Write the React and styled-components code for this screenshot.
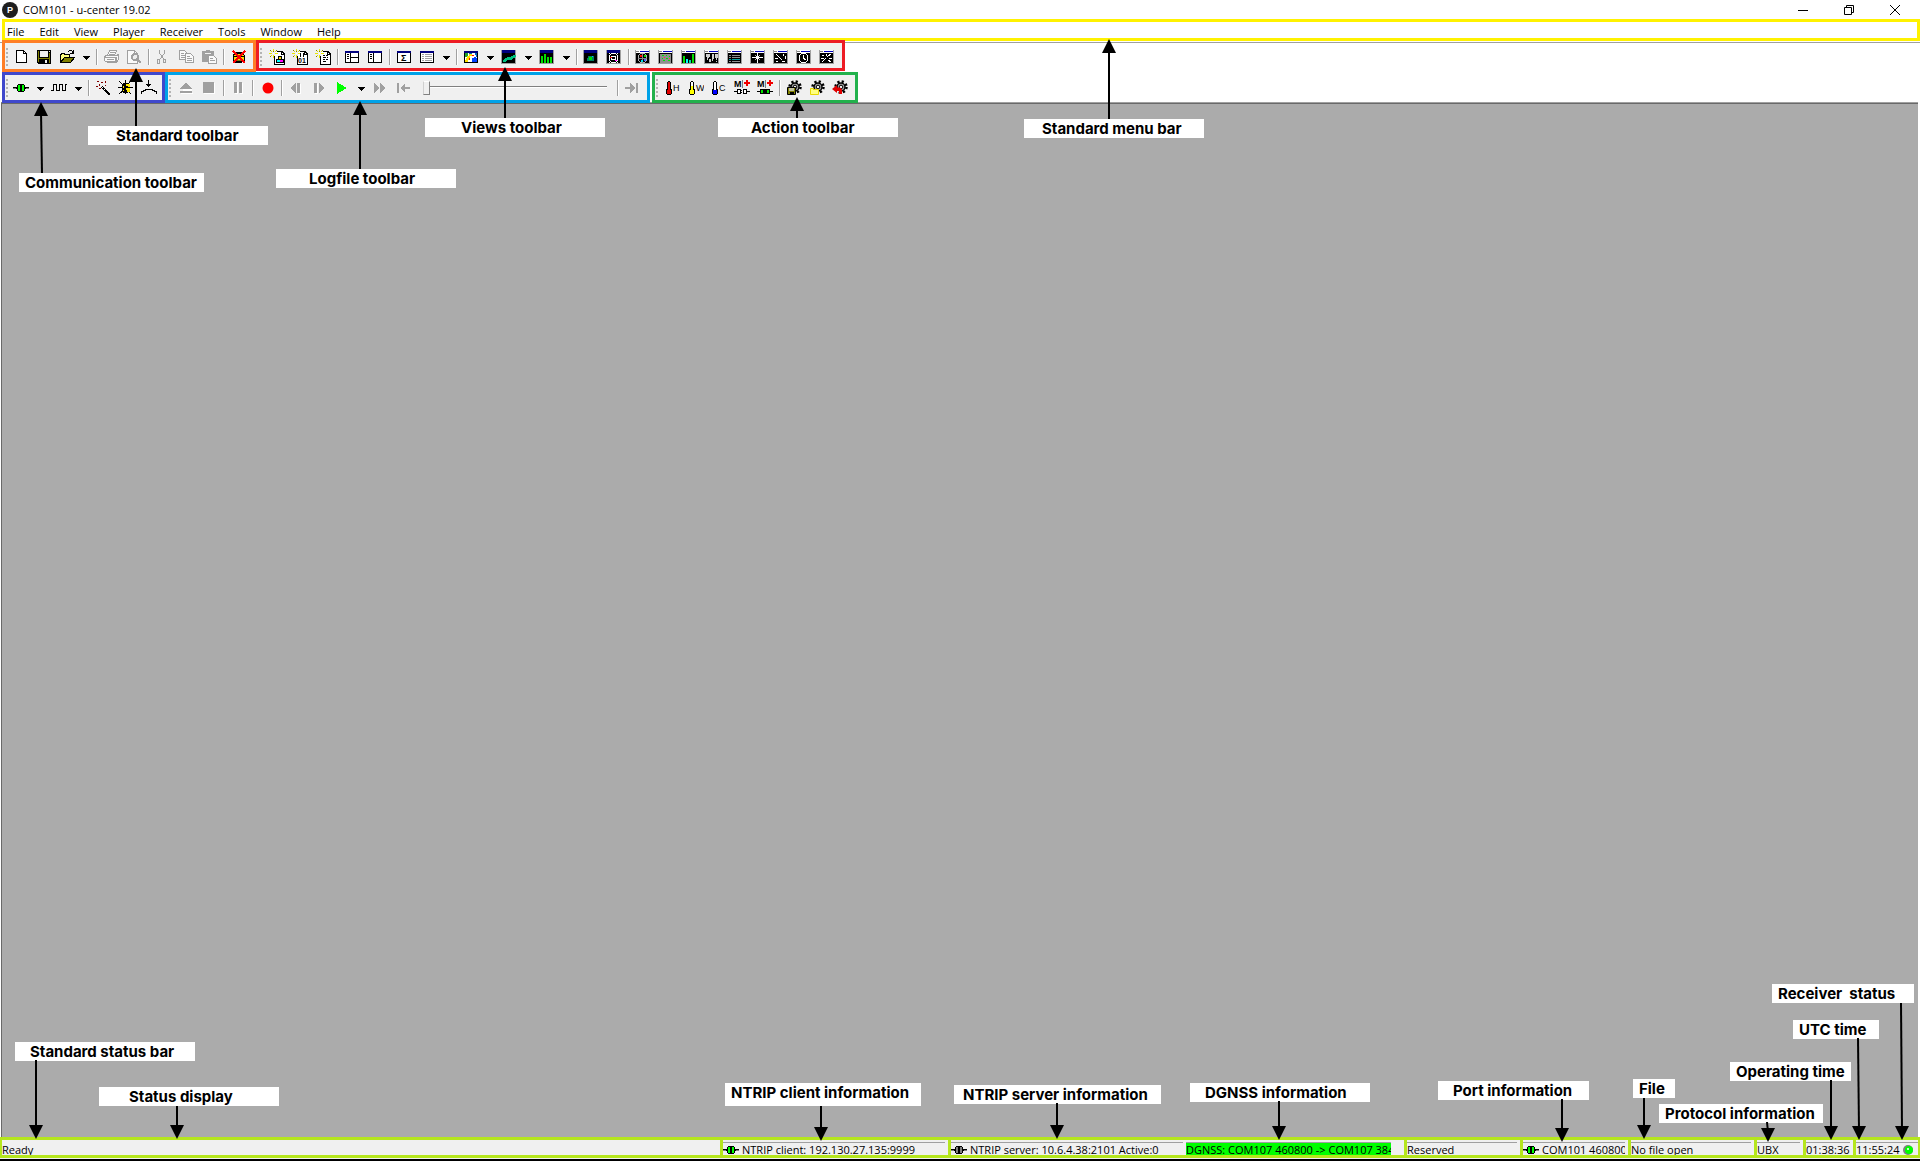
import React from "react";
import styled, { createGlobalStyle } from "styled-components";

const GlobalStyle = createGlobalStyle`
  *, *::before, *::after { box-sizing: border-box; }
  body {
    margin: 0;
    background: #fff;
    color: #000;
    font-family: "Open Sans", "Noto Sans", sans-serif;
    font-size: 11px;
  }
  button, input { font: inherit; color: inherit; }
`;

/* ---------- window frame ---------- */

const Window = styled.div`
  position: relative;
  display: flex;
  flex-direction: column;
  min-height: 100vh;
  overflow: hidden;
  background: #fff;
`;

const TitleBar = styled.header`
  display: flex;
  align-items: center;
  height: 19px;
  padding: 1px 2px 0;
`;

const Title = styled.h1`
  flex: 1;
  margin: 0 0 0 5px;
  font-size: 11px;
  font-weight: 400;
  line-height: 16px;
`;

const WindowButton = styled.button`
  display: flex;
  align-items: center;
  justify-content: center;
  width: 46px;
  height: 16px;
  padding: 0;
  border: 0;
  background: transparent;
`;

const MenuBar = styled.nav`
  display: flex;
  align-items: center;
  gap: 15px;
  height: 22px;
  margin-left: 2px;
  padding: 3px 2px 0;
  border: 3px solid #fff200;
`;

const MenuLink = styled.a`
  color: #000;
  line-height: 13px;
  text-decoration: none;
`;

/* ---------- toolbars ---------- */

const ToolbarArea = styled.div`
  position: relative;
  z-index: 1;
  margin-top: -1px;
  padding-left: 2px;
  background: linear-gradient(#a0a0a0, #a0a0a0) 0 2px / 100% 1px no-repeat;
`;

const ToolbarRow = styled.div`
  display: flex;
  align-items: flex-start;
  gap: ${(p) => p.$gap || 0}px;
`;

const Toolbar = styled.div`
  display: flex;
  align-items: flex-start;
  height: ${(p) => p.$height}px;
  padding: ${(p) => p.$top}px ${(p) => p.$end}px 0 0;
  border: 3px solid ${(p) => p.$frame};
  background: #f0f0f0;
`;

const Grip = styled.span`
  width: ${(p) => p.$width}px;
  height: 20px;
  background: repeating-linear-gradient(#b4b4b4 0 2px, transparent 2px 4px) 1px 2px / 2px 100% no-repeat;
`;

const Separator = styled.span`
  width: 6px;
  height: 21px;
  background: linear-gradient(90deg, #a0a0a0 50%, #fff 50%) 2px 3px / 2px 16px no-repeat;
`;

const ToolButton = styled.button`
  display: flex;
  align-items: flex-start;
  width: 23px;
  height: 21px;
  padding: 3px 0 0 3px;
  border: 0;
  background: transparent;
`;

const CaretButton = styled(ToolButton)`
  width: 15px;
  padding: 10px 0 0 4px;
`;

const Position = styled.input`
  appearance: none;
  width: 184px;
  height: 16px;
  margin: 3px 8px 0;
  background: linear-gradient(#808080 50%, #fff 50%) 0 6px / 100% 2px no-repeat;
  &::-webkit-slider-thumb {
    appearance: none;
    width: 7px;
    height: 14px;
    border: 1px solid #808080;
    border-top-color: #fff;
    border-left-color: #d0d0d0;
    background: #f0f0f0;
  }
`;

/* ---------- workspace and status bar ---------- */

const Workspace = styled.main`
  flex: 1;
  margin: -1px 2px 0 1px;
  border-top: 1px solid #a0a0a0;
  border-left: 1px solid #696969;
  background: #ababab;
  box-shadow: inset 0 1px #696969;
`;

const StatusBar = styled.footer`
  display: flex;
  height: 21px;
  border: solid #b5e61d;
  border-width: 3px 2px;
  background: #f0f0f0;
`;

const Cell = styled.div`
  flex: ${(p) => (p.$width ? `0 0 ${p.$width}px` : "1 1 0")};
  min-width: 0;
  padding: 2px ${(p) => (p.$tight ? 0 : 3)}px 0 0;
  border-left: ${(p) => (p.$marked ? "3px solid #b5e61d" : "0 solid transparent")};
  overflow: hidden;
`;

const CellText = styled.div`
  display: flex;
  align-items: center;
  gap: 3px;
  height: 15px;
  border-top: 1px solid ${(p) => (p.$flat ? "transparent" : "#a0a0a0")};
  background: ${(p) => p.$fill || "transparent"};
  margin-right: ${(p) => (p.$fill ? 10 : 0)}px;
  line-height: 14px;
  white-space: nowrap;
  overflow: hidden;
  svg { flex: none; }
`;

const WindowEdge = styled.div`
  height: 3px;
  border-top: 1px solid #f0f0f0;
  background: #000;
`;

/* ---------- callouts ---------- */

const Label = styled.span`
  position: absolute;
  z-index: 2;
  ${(p) => p.$hSide}: ${(p) => p.$x}px;
  ${(p) => p.$vSide}: ${(p) => p.$y}px;
  width: ${(p) => p.$width}px;
  height: ${(p) => p.$height || 19}px;
  padding-left: ${(p) => p.$indent}px;
  background: #fff;
  font: 700 15px/19px Inter, "Open Sans", sans-serif;
  white-space: pre;
`;

const ArrowBox = styled.svg`
  position: absolute;
  z-index: 3;
  ${(p) => p.$hSide}: ${(p) => p.$x}px;
  ${(p) => p.$vSide}: ${(p) => p.$y}px;
`;

const CALLOUTS = [
  { text: "Standard toolbar", x: 88, y: 126, w: 180, indent: 28, ax: 136, from: 126, to: 68 },
  { text: "Communication toolbar", x: 19, y: 173, w: 185, indent: 6, ax: 41, from: 173, to: 102, lean: 1 },
  { text: "Logfile toolbar", x: 276, y: 169, w: 180, indent: 33, ax: 360, from: 169, to: 101 },
  { text: "Views toolbar", x: 425, y: 118, w: 180, indent: 36, ax: 505, from: 118, to: 67 },
  { text: "Action toolbar", x: 718, y: 118, w: 180, indent: 33, ax: 797, from: 118, to: 97 },
  { text: "Standard menu bar", x: 1024, y: 119, w: 180, indent: 18, ax: 1109, from: 119, to: 39 },
  { text: "Standard status bar", x: 15, y: 119, w: 180, indent: 15, ax: 36, from: 101, to: 22, low: true },
  { text: "Status display", x: 99, y: 74, w: 180, indent: 30, ax: 177, from: 55, to: 22, low: true },
  { text: "NTRIP client information", x: 1195, y: 78, w: 196, h: 23, indent: 6, ax: 1099, from: 55, to: 20, low: true, end: true },
  { text: "NTRIP server information", x: 966, y: 76, w: 207, indent: 9, ax: 863, from: 58, to: 22, low: true, end: true },
  { text: "DGNSS information", x: 730, y: 78, w: 180, indent: 15, ax: 641, from: 60, to: 21, low: true, end: true },
  { text: "Port information", x: 482, y: 80, w: 151, indent: 15, ax: 358, from: 62, to: 19, low: true, end: true },
  { text: "File", x: 287, y: 82, w: 42, indent: 6, ax: 276, from: 63, to: 22, low: true, end: true },
  { text: "Protocol information", x: 261, y: 57, w: 164, indent: 6, ax: 152, from: 39, to: 19, low: true, end: true, lean: -1 },
  { text: "Operating time", x: 190, y: 99, w: 121, indent: 6, ax: 89, from: 81, to: 21, low: true, end: true },
  { text: "UTC time", x: 127, y: 141, w: 86, indent: 6, ax: 61, from: 123, to: 21, low: true, end: true, lean: -1 },
  { text: "Receiver  status", x: 148, y: 177, w: 142, indent: 6, ax: 18, from: 158, to: 21, low: true, end: true, lean: -1 },
];

function Callout({ text, x, y, w, h = 19, indent, ax, from, to, low, end, lean = 0 }) {
  const hSide = end ? "right" : "left";
  const length = Math.abs(from - to);
  return (
    <>
      <Label
        $hSide={hSide}
        $vSide={low ? "bottom" : "top"}
        $x={end ? x - w : x}
        $y={low ? y - h : y}
        $width={w}
        $height={h}
        $indent={indent}
      >
        {text}
      </Label>
      <ArrowBox
        $hSide={hSide}
        $vSide={low ? "bottom" : "top"}
        $x={ax - 8}
        $y={to}
        width="16"
        height={length}
        viewBox={`0 0 16 ${length}`}
        aria-hidden="true"
      >
        {low ? (
          <>
            <path d={`M${8 + lean} 0L8 ${length - 10}`} stroke="#000" strokeWidth="2" />
            <path d={`M1 ${length - 14}h14l-7 14z`} />
          </>
        ) : (
          <>
            <path d={`M${8 + lean} ${length}L8 10`} stroke="#000" strokeWidth="2" />
            <path d="M1 14h14L8 0z" />
          </>
        )}
      </ArrowBox>
    </>
  );
}

/* ---------- icons ---------- */

function Svg({ children, smooth }) {
  return (
    <svg width="16" height="16" viewBox="0 0 16 16" fill="none" shapeRendering={smooth ? "auto" : "crispEdges"} aria-hidden="true">
      {children}
    </svg>
  );
}

const Glyph = (props) => (
  <text fontFamily="Liberation Sans, sans-serif" fill="#000" {...props} />
);

const Caret = () => (
  <svg width="7" height="4" viewBox="0 0 7 4" shapeRendering="crispEdges" aria-hidden="true">
    <path d="M0 0h7v1H0zM1 1h5v1H1zM2 2h3v1H2zM3 3h1v1H3z" />
  </svg>
);

const Plug = ({ color = "#00ff00" }) => (
  <Svg>
    <path d="M0 7h4v2H0zM12 7h4v2h-4z" fill="#000" />
    <path d="M0 8h3v1H0zM13 8h3v1h-3z" fill="#808080" />
    <path d="M4 5h1V4h6v1h1v6h-1v1H5v-1H4z" fill="#000" />
    <path d="M5 5h2v6H5zM9 5h2v6H9z" fill={color} />
  </Svg>
);

const Spark = () => (
  <>
    <path d="M4.500 0v3M4.500 6v3M0 4.500h3M6 4.500h3M1 1l2 2M8 1L6 3M1 8l2-2" stroke="#e8e800" />
    <path d="M1 1h1v1H1zM7 1h1v1H7zM1 7h1v1H1zM4 2h1v1H4z" fill="#808000" />
    <path d="M4 4h1v1H4z" fill="#fff" />
  </>
);

const SparkPage = ({ children }) => (
  <Svg>
    <path d="M5.500 7v8h10V5l-3-3H8" fill="#fff" stroke="#000" />
    <path d="M6 3h6v6H6z" fill="#fff" />
    <path d="M12.500 2v3.500h3" stroke="#000" />
    <Spark />
    {children}
  </Svg>
);

const Pane = ({ children }) => (
  <Svg>
    <path d="M1.500 2.500h13v11h-13z" fill="#fff" stroke="#000" />
    <path d="M1 2h14v2H1z" fill="#000080" />
    {children}
  </Svg>
);

const Scope = ({ children, line }) => (
  <Svg>
    <path d="M.5 1.500h14v13H.5z" fill="#000" stroke="#a0a0a0" />
    <path d="M1 1h13v3H1z" fill={line ? "#fff" : "#000080"} />
    {line && <path d="M5 2h9v1H5z" fill="#0000c0" />}
    {line && <path d="M1 2h3v1H1z" fill="#808080" />}
    {children}
  </Svg>
);

const Gear = ({ children }) => (
  <Svg smooth>
    <g transform="translate(9 7)">
      <circle r="5.500" stroke="#000" strokeWidth="2.500" strokeDasharray="2.160 2.160" />
      <circle r="4" fill="#a0a0a0" stroke="#000" strokeWidth="1.500" />
      <circle r="1.800" fill="#f0f0f0" stroke="#000" />
    </g>
    {children}
  </Svg>
);

const Thermometer = ({ color, level, letter }) => (
  <Svg>
    <path d="M3 1h2v1h1v7h1v5H6v1H2v-1H1V9h1V2h1z" fill="#000" />
    <path d="M3 2h2v8H3z" fill="#fff" />
    <path d="M2 10h4v4H2z" fill={color} />
    <path d={`M3 ${level}h2v${11 - level}H3z`} fill={color} />
    <Glyph x="8" y="11" fontSize="9">{letter}</Glyph>
  </Svg>
);

const Start = ({ on }) => (
  <Svg>
    <Glyph x="0" y="7" fontSize="9" fontWeight="700">M</Glyph>
    <path d="M8 0h1v8H8z" fill="#808080" />
    <path d="M12 0h2v2h2v2h-2v2h-2V4h-2V2h2z" fill="#f00000" />
    <path d="M0 11h3v1H0zM13 11h3v1h-3z" fill="#000" />
    <path d="M3.500 9.500h3v4h-3zM9.500 9.500h3v4h-3z" fill={on ? "#00e000" : "#fff"} stroke="#000" />
    {on && <path d="M7 9h2v5H7z" fill="#000" />}
    {!on && <path d="M7 10h1v1H7zM7 12h1v1H7z" fill="#000" />}
  </Svg>
);

const GREY = "#a0a0a0";

const icons = {
  new: <Svg><path d="M3.500 1.500h7l3 3v9h-10z" fill="#fff" stroke="#000" /><path d="M10.500 1.500v3h3" stroke="#000" /></Svg>,
  save: (
    <Svg>
      <path d="M1 1h14v14H2l-1-1z" fill="#000" />
      <path d="M2 2h1v11H2zM13 4h1v10h-1zM3 9h10v1H3z" fill="#808000" />
      <path d="M4 2h8v6H4zM13 2h1v1h-1z" fill="#f0f0f0" />
      <path d="M4 10h8v4H4z" fill="#000" />
      <path d="M9 11h2v3H9z" fill="#f0f0f0" />
    </Svg>
  ),
  open: (
    <Svg>
      <path d="M1.500 13.500v-8h1v-1h3v1h5v3" fill="#ffff80" stroke="#000" />
      <path d="M1.500 13.500l4-5h10l-4 5z" fill="#808000" stroke="#000" />
      <path d="M9 2h1v1H9zM10 1h3v1h-3zM13 2h1v1h-1zM14 1h1v4h-4V4h2V3h1z" fill="#000" />
    </Svg>
  ),
  print: (
    <Svg>
      <path d="M4.500 6.500l2-5h7l-2 5M1.500 7.500l2-1h10l2-1v5l-2 3h-9l-3-2zM1.500 8.500h11v5M13.500 7.500v5" stroke={GREY} fill="#fafafa" />
      <path d="M7 3h5v1H7zM6 5h5v1H6zM4 10h7v1H4zM3 12h9v1H3z" fill={GREY} />
    </Svg>
  ),
  preview: (
    <Svg>
      <path d="M1.500 14.500v-13h7l3 3v10z" fill="#fafafa" stroke={GREY} />
      <path d="M8 1h1v4h3v1H8z" fill={GREY} />
      <circle cx="9" cy="8" r="3" stroke={GREY} strokeWidth="2" fill="#eee" />
      <path d="M11 10l4 4" stroke={GREY} strokeWidth="2.500" />
    </Svg>
  ),
  cut: (
    <Svg>
      <path d="M4.500 1v3l5 7M9.500 1v3l-5 7" stroke={GREY} />
      <path d="M2.500 10.500h2v4h-2zM8.500 10.500h2v3h-2z" stroke={GREY} />
    </Svg>
  ),
  copy: (
    <Svg>
      <path d="M1.500 1.500h5l3 3v6h-8z" fill="#fafafa" stroke={GREY} />
      <path d="M3 4h3v1H3zM3 6h4v1H3zM3 8h4v1H3z" fill={GREY} />
      <path d="M7.500 4.500h5l3 3v6h-8z" fill="#fafafa" stroke={GREY} />
      <path d="M9 7h3v1H9zM9 9h5v1H9zM9 11h5v1H9z" fill={GREY} />
    </Svg>
  ),
  paste: (
    <Svg>
      <path d="M1 2h4V1h4v1h4v11H1z" fill={GREY} />
      <path d="M4 4h6v1H4z" fill="#f0f0f0" />
      <path d="M7.500 6.500h5l3 3v5h-8z" fill="#fafafa" stroke={GREY} />
      <path d="M9 9h3v1H9zM9 11h5v1H9z" fill={GREY} />
    </Svg>
  ),
  clear: (
    <Svg>
      <path d="M3 5h1V4h2V3h6v1h2v2h1v6h-1v1h-2v1H4v-1H3z" fill="#000" />
      <path d="M4 6h3V5h6v1h1v1H4zM4 8h10v4H4z" fill="#ffd800" />
      <path d="M6 9h6v1H6zM5 11h7v1H5z" fill="#808000" />
      <path d="M3 2l12 12M15 2L3 14" stroke="#ff0000" strokeWidth="1.500" />
    </Svg>
  ),
  message: (
    <SparkPage>
      <path d="M9 7h3v3H9z" fill="#ffe000" stroke="#000" />
      <path d="M7 10h8v4H7z" fill="#000" />
      <path d="M8 11h3v2H8z" fill="#00ffff" />
      <path d="M11 11h3v2h-3z" fill="#ff00ff" />
    </SparkPage>
  ),
  binary: (
    <SparkPage>
      <path d="M8 4h1v4H8zM11 4h1v4h-1z" fill="#000" />
      <Glyph x="6" y="14" fontSize="7" fontWeight="700">01</Glyph>
    </SparkPage>
  ),
  text: (
    <SparkPage>
      <path d="M8 6h2v1H8zM11 6h2v1h-2zM8 8h3v1H8zM12 8h1v1h-1zM8 10h2v1H8zM11 10h2v1h-2zM8 12h3v1H8z" fill="#000" />
    </SparkPage>
  ),
  split: (
    <Pane>
      <path d="M6 4h1v9H6zM7 8h8v1H7z" fill="#000" />
      <path d="M3 5h2v1H3zM3 7h2v1H3zM3 9h2v1H3z" fill="#000" />
    </Pane>
  ),
  side: <Pane><path d="M6 4h1v9H6zM3 5h2v1H3zM3 7h2v1H3zM3 9h2v1H3z" fill="#000" /></Pane>,
  sum: <Pane><Glyph x="5" y="12" fontSize="9" fontWeight="700">Σ</Glyph></Pane>,
  list: <Pane><path d="M3 5h2v1H3zM6 5h7v1H6zM3 7h2v1H3zM6 7h7v1H6zM3 9h2v1H3zM6 9h7v1H6zM3 11h2v1H3zM6 11h7v1H6z" fill="#a0a0a0" /></Pane>,
  map: (
    <Pane>
      <path d="M2 4h3v4H2z" fill="#20a030" />
      <path d="M2 13v-2h1V9h1V7h2V5h3v2H7v2H6v2H5v2z" fill="#ffe000" />
      <path d="M9 9h2V8h2v1h1v4H9z" fill="#0040ff" />
      <path d="M12 4h2v4h-1V6h-1zM6 4h3v1H6z" fill="#0060c0" />
      <path d="M9 6h2v1H9zM6 9h1v2H6z" fill="#ff0000" />
    </Pane>
  ),
  line: <Scope><path d="M2 12h2v-1h1v-1h2V9h2v1h1V9h1V8h2V7h2" stroke="#00c080" strokeWidth="1.500" /></Scope>,
  bars: <Scope><path d="M2 7h2v7H2zM5 5h2v9H5zM8 8h2v6H8zM11 8h2v6h-2z" fill="#00e000" /></Scope>,
  heat: <Scope><path d="M5 7h6v5H4V9h1z" fill="#008060" /><path d="M6 8h3v3H6z" fill="#00e000" /><path d="M9 7h1v1H9z" fill="#00c0ff" /></Scope>,
  sky: (
    <Scope>
      <circle cx="7.500" cy="9" r="4.500" stroke="#fff" />
      <circle cx="7.500" cy="9" r="2" stroke="#fff" />
      <path d="M3 4l2 2M12 4l-2 2M3 14l2-2M12 14l-2-2" stroke="#fff" />
      <path d="M4 8h2v1H4z" fill="#ff0000" />
      <path d="M9 11h2v1H9z" fill="#ff00ff" />
    </Scope>
  ),
  orbit: (
    <Scope line>
      <circle cx="7.500" cy="9" r="4.500" stroke="#b0b0b0" />
      <path d="M3 9.500h9M7.500 5v9" stroke="#888" />
      <path d="M5 6h2v2H5z" fill="#ff0000" /><path d="M9 6h2v2H9z" fill="#00e000" />
      <path d="M6 11h2v2H6z" fill="#00e0e0" /><path d="M9 10h2v2H9z" fill="#4060ff" />
    </Scope>
  ),
  grid: (
    <Scope line>
      <path d="M2 5h11v9H2z" fill="#909090" />
      <path d="M4 6h2v1H4zM8 6h1v1H8zM4 9h1v1H4zM8 9h2v1H8zM11 7h1v1h-1zM5 11h2v1H5zM10 11h2v1h-2z" fill="#00e000" />
      <path d="M11 9h1v1h-1zM6 8h1v1H6z" fill="#ff4040" />
    </Scope>
  ),
  signal: <Scope line><path d="M2 7h2v7H2zM11 5h2v9h-2z" fill="#00e000" /><path d="M5 10h2v4H5z" fill="#00ffff" /><path d="M8 11h2v3H8z" fill="#00e0a0" /></Scope>,
  world: <Scope line><path d="M2 5h4v3H5v1H4v2H3V8H2zM5 10h2v3H5zM8 5h2v5H9v2H8zM11 5h3v4h-1v2h-1V9h-1zM12 12h1v1h-1z" fill="#d0d0d0" /></Scope>,
  table: <Scope line><path d="M2 6h2v1H2zM5 6h8v1H5zM2 8h2v1H2zM5 8h8v1H5zM2 12h2v1H2zM5 12h8v1H5z" fill="#909090" /><path d="M2 10h2v1H2zM5 10h8v1H5z" fill="#00a0a0" /></Scope>,
  compass: <Scope line><path d="M7 4h1v3h1v1h4v1H9v1H8v4H7v-4H6V9H2V8h4V7h1z" fill="#fff" /><path d="M5 6h1v1H5zM9 6h1v1H9zM5 10h1v1H5zM9 10h1v1H9z" fill="#bbb" /></Scope>,
  meter: <Scope line><path d="M3 5l6 6M2 9.500h3M11 5l-1 2M3 13l2-1M9 12.500h3" stroke="#fff" /><path d="M12 7h1v3h-1z" fill="#fff" /></Scope>,
  clock: <Scope line><circle cx="7.500" cy="9" r="4.500" stroke="#fff" /><path d="M7.500 6v3l2 2" stroke="#fff" /></Scope>,
  deviation: <Scope line><path d="M3 13l4-4M8 8l4-3M3 6l2 1M9 11l3 2M2 9.500h3M10 9.500h3M7.500 5v2" stroke="#fff" /></Scope>,
  plug: <Plug />,
  wave: <Svg><path d="M0 10.500h2.500v-6h3v6h3v-6h3v6h3v-6h1.500" stroke="#000" /></Svg>,
  wand: (
    <Svg>
      <path d="M7 7l8 8" stroke="#000" strokeWidth="2" />
      <path d="M7 7h1v1H7zM9 9h1v1H9z" fill="#fff" />
      <path d="M2 1h2v1H2zM6 2h2v1H6zM10 1h1v2h-1zM1 6h2v1H1zM4 4h1v2H4zM4 8h2v1H4zM10 5h1v1h-1z" fill="#800000" />
    </Svg>
  ),
  bug: (
    <Svg>
      <path d="M1 1l4 4M13 1l-3 3M0 7.500h4M11 7.500h4M1 14l4-3M13 14l-3-3M7.500 0v3" stroke="#000" />
      <ellipse cx="7.500" cy="8" rx="4" ry="5.500" fill="#000" />
      <path d="M8 4h4v3h-2V6H8zM8 8h4v4H9v-2H8zM5 6h1v2H5zM5 10h1v1H5z" fill="#ffe800" />
    </Svg>
  ),
  detect: (
    <Svg>
      <path d="M7 0h1v4h2v1H9v1H8v1H7V6H6V5H5V4h2z" fill="#000" />
      <path d="M.5 14v-2.500h2v-1h2v-1h7v1h2v1h2V14" stroke="#000" />
    </Svg>
  ),
  eject: <Svg><path d="M3 14h12v-1h-1V9L8 3" fill="#fff" /><path d="M8 2l6 7H2zM2 11h12v2H2z" fill={GREY} /></Svg>,
  stop: <Svg><path d="M3 3h11v11H3z" fill="#fff" /><path d="M2 2h11v11H2z" fill={GREY} /></Svg>,
  pause: <Svg><path d="M5 3h3v11H5zM10 3h3v11h-3z" fill="#fff" /><path d="M4 2h3v11H4zM9 2h3v11H9z" fill={GREY} /></Svg>,
  record: <Svg smooth><circle cx="9" cy="8" r="5.500" fill="#ff0000" /></Svg>,
  back: <Svg><path d="M8 3v10L2 8zM9 3h3v10H9z" fill={GREY} /><path d="M12 4h1v10h-3v-1h2z" fill="#fff" /></Svg>,
  step: <Svg><path d="M3 3h3v10H3zM8 3l6 5-6 5z" fill={GREY} /><path d="M6 4h1v10H4v-1h2z" fill="#fff" /></Svg>,
  play: <Svg><path d="M3 2l10 6-10 6z" fill="#00ff00" /></Svg>,
  forward: <Svg><path d="M2 3l6 5-6 5zM8 3l6 5-6 5z" fill={GREY} /></Svg>,
  first: <Svg><path d="M2 3h2v10H2zM5 8l5-5v4h5v2h-5v4z" fill={GREY} /></Svg>,
  last: <Svg><path d="M12 3h2v10h-2zM11 8L6 3v4H1v2h5v4z" fill={GREY} /></Svg>,
  hot: <Thermometer color="#e00000" level={2} letter="H" />,
  warm: <Thermometer color="#ffff00" level={6} letter="W" />,
  cold: <Thermometer color="#0000ff" level={10} letter="C" />,
  startOff: <Start />,
  startOn: <Start on />,
  gearSave: <Gear><path d="M1.500 7.500h8v7h-8z" fill="#808000" stroke="#000" /><path d="M3 8h5v3H3z" fill="#c0c0a0" /><path d="M4 12h4v2H4z" fill="#000" /></Gear>,
  gearOpen: <Gear><path d="M1.500 14.500v-6h3v1h5v5z" fill="#ffff80" stroke="#e8d800" /></Gear>,
  gearReset: <Gear><path d="M0 9l5-4v2.500h3l2 2V14H7v-3H5v2z" fill="#e00000" /></Gear>,
};

/* ---------- toolbar contents: "|" is a separator, "v" a drop-down arrow ---------- */

const STANDARD = [["new", "New"], ["save", "Save"], ["open", "Open"], "v", "|", ["print", "Print"], ["preview", "Print preview"], "|", ["cut", "Cut"], ["copy", "Copy"], ["paste", "Paste"], "|", ["clear", "Clear"]];
const VIEWS = [["message", "Messages view"], ["binary", "Binary console"], ["text", "Text console"], "|", ["split", "Packet console"], ["side", "Configuration view"], "|", ["sum", "Statistic view"], ["list", "Table view"], "v", "|", ["map", "Map view"], "v", ["line", "Chart view"], "v", ["bars", "Histogram view"], "v", "|", ["heat", "Deviation map"], ["sky", "Sky view"], "|", ["orbit", "Satellite position"], ["grid", "Deviation"], ["signal", "Satellite level"], ["world", "World position"], ["table", "Data"], ["compass", "Compass"], ["meter", "Speed"], ["clock", "Clock"], ["deviation", "Altitude"]];
const COMMUNICATION = [["plug", "Connect"], "v", ["wave", "Baud rate"], "v", "|", ["wand", "Autobauding"], ["bug", "Debug messages"], ["detect", "Force connection"]];
const LOGFILE = [["eject", "Eject"], ["stop", "Stop"], "|", ["pause", "Pause"], "|", ["record", "Record"], "|", ["back", "Step back"], ["step", "Step forward"], ["play", "Play"], "v", ["forward", "Fast forward"], ["first", "Go to start"]];
const LOGFILE_END = ["|", ["last", "Go to end"]];
const ACTION = [["hot", "Hot start"], ["warm", "Warm start"], ["cold", "Cold start"], ["startOff", "Assisted start"], ["startOn", "Assisted start, connected"], "|", ["gearSave", "Save configuration"], ["gearOpen", "Load configuration"], ["gearReset", "Revert configuration"]];

const Tools = ({ items }) =>
  items.map((item, i) => {
    if (item === "|") return <Separator key={i} />;
    if (item === "v") return <CaretButton key={i} aria-label="More"><Caret /></CaretButton>;
    return <ToolButton key={i} aria-label={item[1]}>{icons[item[0]]}</ToolButton>;
  });

const MENUS = ["File", "Edit", "View", "Player", "Receiver", "Tools", "Window", "Help"];

export default function App() {
  return (
    <Window>
      <GlobalStyle />
      <TitleBar>
        <svg width="16" height="16" viewBox="0 0 16 16" aria-hidden="true">
          <circle cx="8" cy="8" r="8" fill="#1e1e1e" />
          <Glyph x="5" y="11" fontSize="9" fontWeight="700" fill="#fff">P</Glyph>
        </svg>
        <Title>COM101 - u-center 19.02</Title>
        <WindowButton aria-label="Minimize">
          <svg width="10" height="10" viewBox="0 0 10 10"><path d="M0 5h10v1H0z" /></svg>
        </WindowButton>
        <WindowButton aria-label="Restore">
          <svg width="10" height="10" viewBox="0 0 10 10" fill="none" stroke="#000"><path d="M.5 2.500h7v7h-7zM2.500 2.500v-2h7v7h-2" /></svg>
        </WindowButton>
        <WindowButton aria-label="Close">
          <svg width="10" height="10" viewBox="0 0 10 10" stroke="#000"><path d="M0 0l10 10M10 0L0 10" /></svg>
        </WindowButton>
      </TitleBar>
      <MenuBar aria-label="Menu">
        {MENUS.map((m) => <MenuLink key={m} href="#">{m}</MenuLink>)}
      </MenuBar>
      <ToolbarArea>
        <ToolbarRow>
          <Toolbar $frame="#ff7f27" $height={32} $top={3} $end={3} role="toolbar" aria-label="Standard">
            <Grip $width={5} />
            <Tools items={STANDARD} />
          </Toolbar>
          <Toolbar $frame="#ed1c24" $height={31} $top={3} $end={3} role="toolbar" aria-label="Views">
            <Grip $width={7} />
            <Tools items={VIEWS} />
          </Toolbar>
        </ToolbarRow>
        <ToolbarRow $gap={2}>
          <ToolbarRow>
            <Toolbar $frame="#3f48cc" $height={31} $top={2} $end={1} role="toolbar" aria-label="Communication">
              <Grip $width={5} />
              <Tools items={COMMUNICATION} />
            </Toolbar>
            <Toolbar $frame="#00a2e8" $height={31} $top={2} $end={3} role="toolbar" aria-label="Logfile">
              <Grip $width={7} />
              <Tools items={LOGFILE} />
              <Position type="range" defaultValue="0" aria-label="Log position" />
              <Tools items={LOGFILE_END} />
            </Toolbar>
          </ToolbarRow>
          <Toolbar $frame="#22b14c" $height={31} $top={2} $end={3} role="toolbar" aria-label="Action">
            <Grip $width={7} />
            <Tools items={ACTION} />
          </Toolbar>
        </ToolbarRow>
      </ToolbarArea>
      <Workspace />
      <StatusBar>
        <Cell><CellText $flat>Ready</CellText></Cell>
        <Cell $width={228} $marked><CellText><Plug />NTRIP client: 192.130.27.135:9999</CellText></Cell>
        <Cell $width={238} $marked><CellText><Plug color="#808080" />NTRIP server: 10.6.4.38:2101 Active:0</CellText></Cell>
        <Cell $width={218}><CellText $fill="#00ff00">DGNSS: COM107 460800 -&gt; COM107 38400</CellText></Cell>
        <Cell $width={116} $marked><CellText>Reserved</CellText></Cell>
        <Cell $width={108} $marked><CellText><Plug />COM101 460800</CellText></Cell>
        <Cell $width={126} $marked><CellText>No file open</CellText></Cell>
        <Cell $width={49} $marked><CellText>UBX</CellText></Cell>
        <Cell $width={50} $marked><CellText>01:38:36</CellText></Cell>
        <Cell $width={47} $marked $tight><CellText>11:55:24</CellText></Cell>
        <Cell $width={18} $tight>
          <CellText>
            <Svg smooth>
              <circle cx="8" cy="8" r="5" fill="#808080" />
              <circle cx="9" cy="8" r="4" fill="#00ff00" />
              <circle cx="8" cy="7" r="1" fill="#fff" />
            </Svg>
          </CellText>
        </Cell>
      </StatusBar>
      <WindowEdge />
      {CALLOUTS.map((c) => <Callout key={c.text} {...c} />)}
    </Window>
  );
}
